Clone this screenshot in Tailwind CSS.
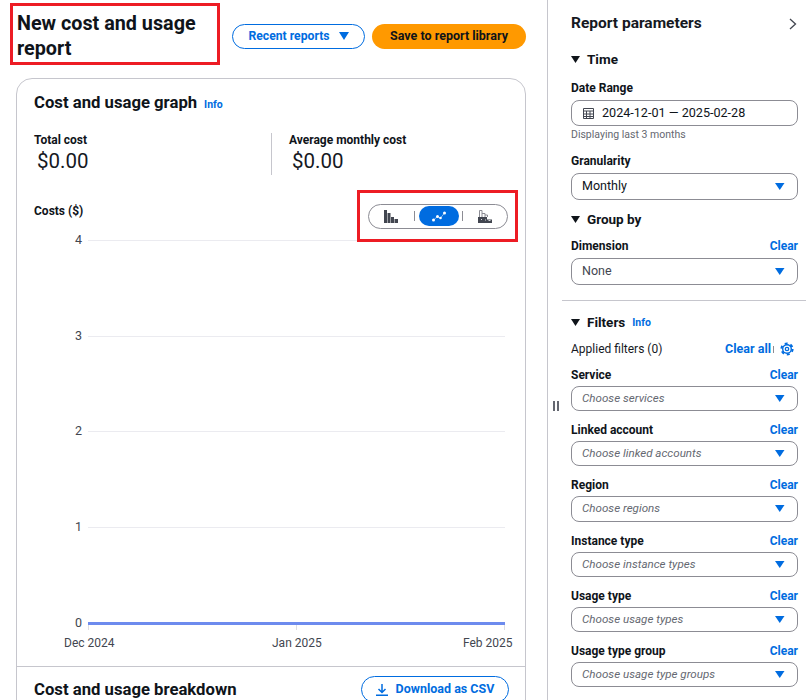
<!doctype html>
<html lang="en">
<head>
<meta charset="utf-8" />
<script src="https://cdn.jsdelivr.net/npm/@tailwindcss/browser@4"></script>
</head>
<body class="bg-white overflow-hidden">
<div class="flex w-[810px] h-[700px] overflow-hidden font-['Roboto',sans-serif] text-[#0f141a]">
  <!-- left column -->
  <div class="w-[548px] shrink-0 border-r border-[#c6c6cd] pl-[10px] pr-[21px] pt-[3px]">
    <div class="flex items-center h-[62px]">
      <h1 class="w-[210px] h-[62px] shrink-0 border-[3px] border-[#ed1c24] pl-[4px] pt-[5px] text-[19.750px] leading-[25px] font-bold">New cost and usage report</h1>
      <button class="ml-[12px] mt-[4px] w-[133px] h-[25px] rounded-full border border-[#006ce0] text-[#006ce0] text-[12.200px] font-bold flex items-center justify-center gap-[9px] bg-white">Recent reports <svg width="10" height="8" viewBox="0 0 10 8"><path d="M0 0h10L5 8z" fill="#006ce0"/></svg></button>
      <button class="ml-[7px] mt-[4px] w-[154px] h-[25px] rounded-full bg-[#ff9900] text-[12.500px] font-bold flex items-center justify-center">Save to report library</button>
    </div>
    <div class="ml-[6px] mt-[13px] w-[510px] h-[700px] rounded-t-[16px] border border-[#c6c6cd] flex flex-col">
      <div class="px-[17px] pt-[13px] h-[587px] shrink-0">
        <div class="flex items-baseline gap-[7px]">
          <h2 class="text-[16.700px] leading-[22px] font-bold">Cost and usage graph</h2>
          <span class="text-[10.500px] font-bold text-[#006ce0]">Info</span>
        </div>
        <div class="flex mt-[19px] h-[42px]">
          <div class="w-[238px] border-r border-[#c6c6cd]">
            <div class="text-[12px] leading-[14px] font-bold">Total cost</div>
            <div class="pl-[3px] pt-[1px] text-[20.500px] leading-[27px] text-[#16191f]">$0.00</div>
          </div>
          <div class="pl-[17px]">
            <div class="text-[12px] leading-[14px] font-bold">Average monthly cost</div>
            <div class="pl-[3px] pt-[1px] text-[20.500px] leading-[27px] text-[#16191f]">$0.00</div>
          </div>
        </div>
        <div class="flex justify-between mt-[15px] h-[52px]">
          <div class="text-[12px] font-bold pt-[13px] leading-[16px]">Costs ($)</div>
          <div class="relative z-10 w-[161px] h-[52px] -mr-[10px] border-[3px] border-[#ed1c24] flex items-center justify-center">
            <div class="w-[140px] h-[25px] rounded-full border border-[#8c8c94] flex items-center pl-[15px]">
              <svg class="shrink-0" width="14" height="13" viewBox="0 0 14 13" fill="#424650"><path d="M0 0h3v13H0zM3.500 3h3v10h-3zM7 7h3v6H7zM10.500 9H14v4h-3.500z"/></svg>
              <span class="ml-[16px] w-px h-[10px] bg-[#8c8c94] shrink-0"></span>
              <span class="ml-[4px] w-[40px] h-[20px] rounded-full bg-[#006ce0] flex items-center justify-center shrink-0">
                <svg width="14" height="11" viewBox="0 0 14 11" fill="#fff"><circle cx="1.500" cy="9" r="1.500"/><circle cx="5.500" cy="5.500" r="1.500"/><circle cx="8.500" cy="7" r="1.300"/><circle cx="12.500" cy="2" r="1.500"/><path d="M1.500 9l4-3.500 3 1.500 4-5" fill="none" stroke="#fff" stroke-width=".5"/></svg>
              </span>
              <span class="ml-[3px] w-px h-[10px] bg-[#8c8c94] shrink-0"></span>
              <svg class="ml-[15px] shrink-0" width="14" height="13" viewBox="0 0 14 13"><path d="M0 7h9v6H0zM9 9.500h5V13H9z" fill="#424650"/><path d="M1.500 7V.5h2.500V7M4 3.500h3V7M7 5h2.500v2" fill="none" stroke="#8c8c94"/><path d="M3 9.500h1M7 10h1M10.500 10.500h2" stroke="#fff" stroke-width=".8"/></svg>
            </div>
          </div>
        </div>
        <!-- chart -->
        <div class="-mx-[17px] h-[412px] -mt-[2px] pl-[71px] pr-[20px]">
          <div class="flex flex-col justify-between h-[385px]">
            <div class="relative h-px bg-[#ebebf0]"><span class="absolute -left-[13px] -top-[9px] text-[12.500px] leading-[18px] text-[#424650]">4</span></div>
            <div class="relative h-px bg-[#ebebf0]"><span class="absolute -left-[13px] -top-[9px] text-[12.500px] leading-[18px] text-[#424650]">3</span></div>
            <div class="relative h-px bg-[#ebebf0]"><span class="absolute -left-[13px] -top-[9px] text-[12.500px] leading-[18px] text-[#424650]">2</span></div>
            <div class="relative h-px bg-[#ebebf0]"><span class="absolute -left-[13px] -top-[9px] text-[12.500px] leading-[18px] text-[#424650]">1</span></div>
            <div class="relative h-[3px] bg-[#6d8bee]"><span class="absolute -left-[13px] -top-[8px] text-[12.500px] leading-[18px] text-[#424650]">0</span></div>
          </div>
          <div class="h-[5px] flex justify-between">
            <span class="w-px h-[5px] bg-[#dedee3]"></span><span class="w-px h-[5px] bg-[#dedee3]"></span><span class="w-px h-[5px] bg-[#dedee3]"></span>
          </div>
          <div class="flex -ml-[24px] text-[12px] leading-[18px] text-[#424650] mt-[4px] whitespace-nowrap">
            <span class="w-[208px] shrink-0">Dec 2024</span><span class="w-[191px] shrink-0">Jan 2025</span><span class="shrink-0">Feb 2025</span>
          </div>
        </div>
      </div>
      <div class="border-t border-[#c6c6cd] pl-[17px] pr-[16px] pt-[9px] flex justify-between items-center">
        <h2 class="text-[16.700px] leading-[24px] font-bold">Cost and usage breakdown</h2>
        <button class="w-[148px] h-[27px] rounded-full border border-[#006ce0] text-[#006ce0] text-[12.500px] font-bold flex items-center justify-center gap-[8px]">
          <svg width="12" height="12" viewBox="0 0 12 12" fill="none" stroke="#006ce0" stroke-width="1.500"><path d="M6 0v8M2.500 5L6 8.500 9.500 5M0 11.250h12"/></svg>Download as CSV</button>
      </div>
    </div>
  </div>
  <!-- right panel -->
  <div class="relative flex-1">
    <div class="pl-[23px] pr-[12px] pt-[14px]">
      <div class="flex justify-between items-center h-[20px]">
        <h2 class="text-[15.500px] font-bold text-[#16191f]">Report parameters</h2>
        <svg width="8" height="12" viewBox="0 0 8 12" fill="none" stroke="#424650" stroke-width="1.300" class="mr-[1px]"><path d="M1 1l5.500 5L1 11"/></svg>
      </div>
      <div class="mt-[16px] flex items-center gap-[7px] h-[18px]"><svg width="9" height="7" viewBox="0 0 9 7"><path d="M0 0h9L4.500 7z" fill="#0f141a"/></svg><span class="text-[13.500px] font-bold">Time</span></div>
      <div class="mt-[12px] text-[12px] font-bold leading-[16px]">Date Range</div>
      <div class="mt-[4px] h-[26px] rounded-[8px] border border-[#8c8c94] flex items-center pl-[11px] text-[12.600px] text-[#0f141a]">
        <svg width="11" height="11" viewBox="0 0 11 11" fill="none" stroke="#424650"><path d="M.5.5h10v10H.5zM.5 3h10M3.500 3v7.500M7 3v7.500M.5 6h10M.5 8.500h10"/></svg>
        <span class="ml-[8px]">2024-12-01 — 2025-02-28</span>
      </div>
      <div class="mt-[2px] text-[10.500px] leading-[14px] text-[#656871]">Displaying last 3 months</div>
      <div class="mt-[11px]">
        <div class="text-[12px] font-bold leading-[16px]">Granularity</div>
        <div class="mt-[4px] h-[27px] rounded-[8px] border border-[#8c8c94] flex items-center justify-between pl-[10px] pr-[12px] text-[12.500px]">Monthly<svg width="10" height="8" viewBox="0 0 10 8"><path d="M0 0h9.500L4.750 7z" fill="#006ce0"/></svg></div>
      </div>
      <div class="mt-[10px] flex items-center gap-[7px] h-[18px]"><svg width="9" height="7" viewBox="0 0 9 7"><path d="M0 0h9L4.500 7z" fill="#0f141a"/></svg><span class="text-[13.500px] font-bold">Group by</span></div>
      <div class="mt-[10px] flex justify-between items-center h-[16px]"><span class="text-[12px] font-bold">Dimension</span><span class="text-[12px] font-bold text-[#006ce0]">Clear</span></div>
      <div class="mt-[4px] h-[27px] rounded-[8px] border border-[#8c8c94] flex items-center justify-between pl-[10px] pr-[12px] text-[12.500px] text-[#424650]">None<svg width="10" height="8" viewBox="0 0 10 8"><path d="M0 0h9.500L4.750 7z" fill="#006ce0"/></svg></div>
    </div>
    <div class="ml-[14px] w-[244px] mt-[15px] h-px bg-[#c6c6cd]"></div>
    <div class="pl-[23px] pr-[12px]">
      <div class="mt-[12px] flex items-center gap-[7px] h-[18px]"><svg width="9" height="7" viewBox="0 0 9 7"><path d="M0 0h9L4.500 7z" fill="#0f141a"/></svg><span class="text-[13.500px] font-bold">Filters</span><span class="text-[10.500px] font-bold text-[#006ce0] pt-[2px]">Info</span></div>
      <div class="mt-[9px] flex justify-between items-center h-[18px]">
        <span class="text-[12px] text-[#16191f]">Applied filters (0)</span>
        <span class="flex items-center text-[12.500px] font-bold text-[#006ce0]">Clear all<span class="ml-[2px] mr-[6px] w-px h-[7px] bg-[#8c8c94]"></span>
          <svg class="mr-[4px]" width="14" height="14" viewBox="0 0 14 14" fill="none" stroke="#006ce0"><circle cx="7" cy="7" r="4.300" stroke-width="1.400"/><circle cx="7" cy="7" r="5.600" stroke-width="2" stroke-dasharray="2.900 2.960"/><circle cx="7" cy="7" r="1.700" stroke-width="1.300"/></svg>
        </span>
      </div>
      <div class="mt-[9px] flex justify-between items-center h-[16px]"><span class="text-[12px] font-bold">Service</span><span class="text-[12px] font-bold text-[#006ce0]">Clear</span></div>
      <div class="mt-[3px] h-[25px] rounded-[8px] border border-[#8c8c94] flex items-center justify-between pl-[10px] pr-[12px] text-[11.600px] italic text-[#656871]">Choose services<svg width="10" height="8" viewBox="0 0 10 8"><path d="M0 0h9.500L4.750 7z" fill="#006ce0"/></svg></div>
      <div class="mt-[11px] flex justify-between items-center h-[16px]"><span class="text-[12px] font-bold">Linked account</span><span class="text-[12px] font-bold text-[#006ce0]">Clear</span></div>
      <div class="mt-[3px] h-[25px] rounded-[8px] border border-[#8c8c94] flex items-center justify-between pl-[10px] pr-[12px] text-[11.600px] italic text-[#656871]">Choose linked accounts<svg width="10" height="8" viewBox="0 0 10 8"><path d="M0 0h9.500L4.750 7z" fill="#006ce0"/></svg></div>
      <div class="mt-[11px] flex justify-between items-center h-[16px]"><span class="text-[12px] font-bold">Region</span><span class="text-[12px] font-bold text-[#006ce0]">Clear</span></div>
      <div class="mt-[3px] h-[26px] rounded-[8px] border border-[#8c8c94] flex items-center justify-between pl-[10px] pr-[12px] text-[11.600px] italic text-[#656871]">Choose regions<svg width="10" height="8" viewBox="0 0 10 8"><path d="M0 0h9.500L4.750 7z" fill="#006ce0"/></svg></div>
      <div class="mt-[11px] flex justify-between items-center h-[16px]"><span class="text-[12px] font-bold">Instance type</span><span class="text-[12px] font-bold text-[#006ce0]">Clear</span></div>
      <div class="mt-[3px] h-[25px] rounded-[8px] border border-[#8c8c94] flex items-center justify-between pl-[10px] pr-[12px] text-[11.600px] italic text-[#656871]">Choose instance types<svg width="10" height="8" viewBox="0 0 10 8"><path d="M0 0h9.500L4.750 7z" fill="#006ce0"/></svg></div>
      <div class="mt-[11px] flex justify-between items-center h-[16px]"><span class="text-[12px] font-bold">Usage type</span><span class="text-[12px] font-bold text-[#006ce0]">Clear</span></div>
      <div class="mt-[3px] h-[25px] rounded-[8px] border border-[#8c8c94] flex items-center justify-between pl-[10px] pr-[12px] text-[11.600px] italic text-[#656871]">Choose usage types<svg width="10" height="8" viewBox="0 0 10 8"><path d="M0 0h9.500L4.750 7z" fill="#006ce0"/></svg></div>
      <div class="mt-[11px] flex justify-between items-center h-[16px]"><span class="text-[12px] font-bold">Usage type group</span><span class="text-[12px] font-bold text-[#006ce0]">Clear</span></div>
      <div class="mt-[3px] h-[25px] rounded-[8px] border border-[#8c8c94] flex items-center justify-between pl-[10px] pr-[12px] text-[11.600px] italic text-[#656871]">Choose usage type groups<svg width="10" height="8" viewBox="0 0 10 8"><path d="M0 0h9.500L4.750 7z" fill="#006ce0"/></svg></div>
    </div>
    <!-- resize handle over the panel edge -->
    <div class="absolute left-[5px] top-[401px] flex gap-[2px]"><span class="w-[2px] h-[10px] bg-[#656871]"></span><span class="w-[2px] h-[10px] bg-[#656871]"></span></div>
  </div>
</div>
</body>
</html>
